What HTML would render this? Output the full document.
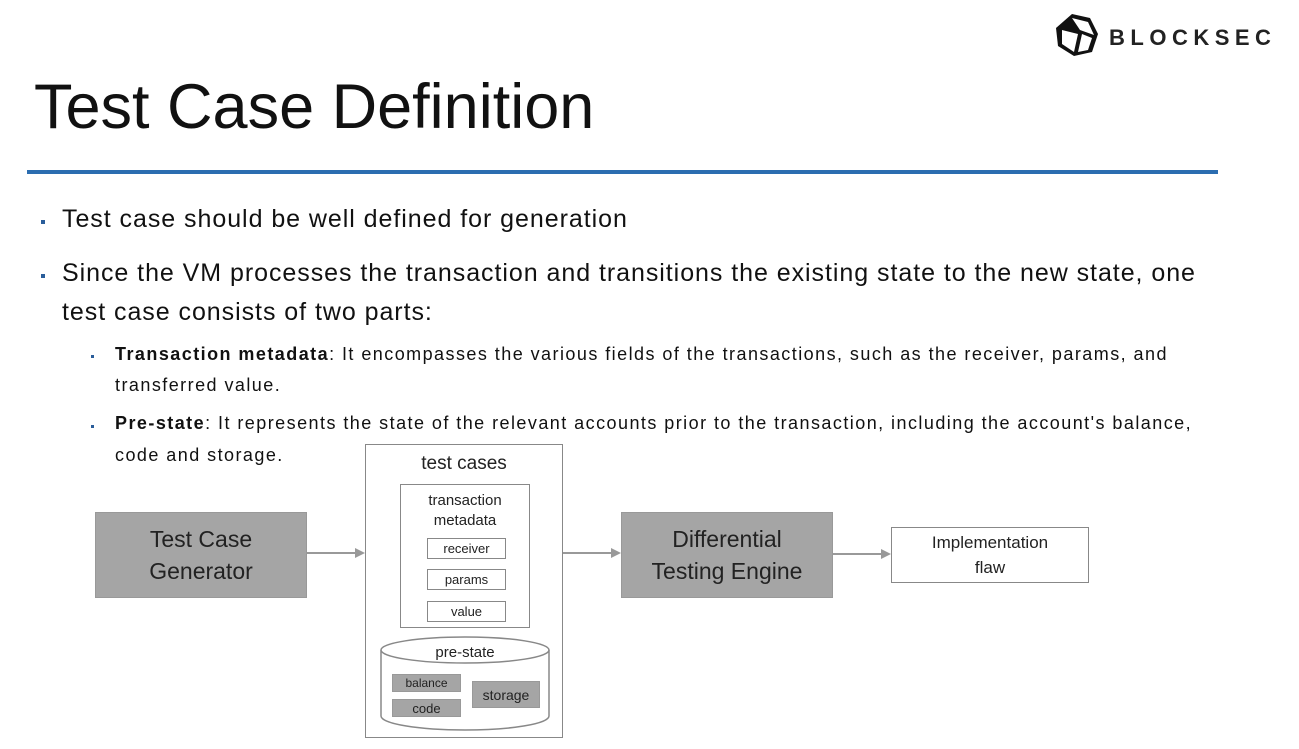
<!DOCTYPE html>
<html><head><style>
body{margin:0;width:1299px;height:749px;background:#fff;position:relative;overflow:hidden;font-family:"Liberation Sans",sans-serif;color:#111}
.a{position:absolute;white-space:nowrap}
.box{position:absolute;box-sizing:border-box;border:1.5px solid #888;background:#fff;display:flex;align-items:center;justify-content:center;text-align:center;font-family:"Liberation Sans",sans-serif;color:#222}
.g{background:#a5a5a5;border-color:#999}
.dot{position:absolute;width:4px;height:4px;background:#2a5d9a}
.b{font-size:25px;letter-spacing:0.95px}
.s{font-size:18px;letter-spacing:1.45px}
</style></head><body>
<svg class="a" style="left:1054px;top:12px" width="46" height="46" viewBox="0 0 46 46">
<polygon points="18,2 36,6 44,22 38,40 20,44 4,34 2,16" fill="#111"/>
<path d="M18,6 L34,10 L40,23 L26,18 Z M8,18 L24,22 L20,40 L8,32 Z M28,22 L38,26 L34,38 L24,40 Z" fill="#fff"/>
</svg>
<div class="a" style="left:1109px;top:25px;font-size:22px;font-weight:bold;letter-spacing:5.5px;color:#222">BLOCKSEC</div>
<div class="a" style="left:34px;top:71px;font-size:63px;color:#111">Test Case Definition</div>
<div class="a" style="left:27px;top:170px;width:1191px;height:4px;background:#2b6db0"></div>
<div class="dot" style="left:41px;top:220px"></div>
<div class="a b" style="left:62px;top:205px">Test case should be well defined for generation</div>
<div class="dot" style="left:41px;top:274px"></div>
<div class="a b" style="left:62px;top:259px">Since the VM processes the transaction and transitions the existing state to the new state, one</div>
<div class="a b" style="left:62px;top:298px">test case consists of two parts:</div>
<div class="dot" style="left:91px;top:355px;width:3px;height:3px"></div>
<div class="a s" style="left:115px;top:344px"><b>Transaction metadata</b>: It encompasses the various fields of the transactions, such as the receiver, params, and</div>
<div class="a s" style="left:115px;top:375px">transferred value.</div>
<div class="dot" style="left:91px;top:425px;width:3px;height:3px"></div>
<div class="a s" style="left:115px;top:413px"><b>Pre-state</b>: It represents the state of the relevant accounts prior to the transaction, including the account's balance,</div>
<div class="a s" style="left:115px;top:445px">code and storage.</div>

<svg class="a" style="left:0;top:0" width="1299" height="749">
<g stroke="#999" stroke-width="2" fill="none"><line x1="307" y1="553" x2="362" y2="553"/><line x1="563" y1="553" x2="618" y2="553"/><line x1="833" y1="554" x2="888" y2="554"/></g>
<g fill="#999"><polygon points="365,553 355,548 355,558"/><polygon points="621,553 611,548 611,558"/><polygon points="891,554 881,549 881,559"/></g>
</svg>
<div class="box g" style="left:95px;top:512px;width:212px;height:86px;font-size:23px;line-height:32px">Test Case<br>Generator</div>
<div class="box g" style="left:621px;top:512px;width:212px;height:86px;font-size:23px;line-height:32px">Differential<br>Testing Engine</div>
<div class="box" style="left:891px;top:527px;width:198px;height:56px;font-size:17px;line-height:25px">Implementation<br>flaw</div>
<div class="box" style="left:365px;top:444px;width:198px;height:294px;align-items:flex-start;padding-top:8px;font-size:19px">test cases</div>
<div class="box" style="left:400px;top:484px;width:130px;height:144px;align-items:flex-start;padding-top:6px;font-size:15px;line-height:20px">transaction<br>metadata</div>
<div class="box" style="left:427px;top:538px;width:79px;height:21px;font-size:13px">receiver</div>
<div class="box" style="left:427px;top:569px;width:79px;height:21px;font-size:13px">params</div>
<div class="box" style="left:427px;top:601px;width:79px;height:21px;font-size:13px">value</div>
<svg class="a" style="left:380px;top:636px" width="171" height="96">
<path d="M1,14 L1,80 A84,14 0 0 0 169,80 L169,14" fill="#fff" stroke="#888" stroke-width="1.5"/>
<ellipse cx="85" cy="14" rx="84" ry="13" fill="#fff" stroke="#888" stroke-width="1.5"/>
</svg>
<div class="a" style="left:381px;top:644px;width:168px;text-align:center;font-size:15px;color:#222">pre-state</div>
<div class="box g" style="left:392px;top:674px;width:69px;height:18px;font-size:12px">balance</div>
<div class="box g" style="left:392px;top:699px;width:69px;height:18px;font-size:13px">code</div>
<div class="box g" style="left:472px;top:681px;width:68px;height:27px;font-size:14px">storage</div>
</body></html>
